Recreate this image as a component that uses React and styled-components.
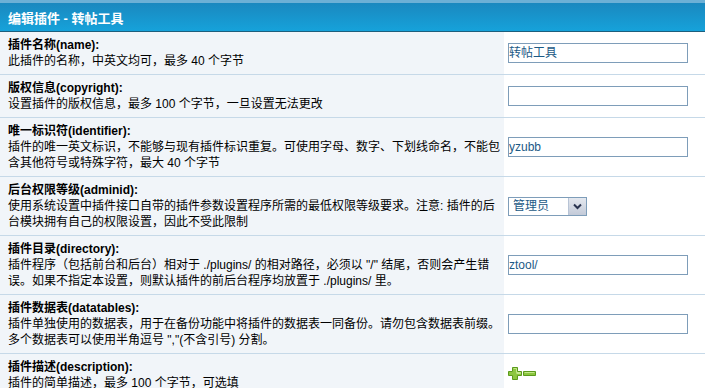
import React from "react";
import styled, { createGlobalStyle } from "styled-components";

const GlobalStyle = createGlobalStyle`
  body {
    margin: 0;
    background: #ffffff;
    font-family: "Liberation Sans", "Noto Sans CJK SC", sans-serif;
    font-size: 12px;
    color: #000;
  }
`;

const fields = [
  {
    title: "插件名称(name):",
    desc: ["此插件的名称，中英文均可，最多 40 个字节"],
    kind: "input",
    value: "转帖工具",
  },
  {
    title: "版权信息(copyright):",
    desc: ["设置插件的版权信息，最多 100 个字节，一旦设置无法更改"],
    kind: "input",
    value: "",
  },
  {
    title: "唯一标识符(identifier):",
    desc: [
      "插件的唯一英文标识，不能够与现有插件标识重复。可使用字母、数字、下划线命名，不能包",
      "含其他符号或特殊字符，最大 40 个字节",
    ],
    kind: "input",
    value: "yzubb",
  },
  {
    title: "后台权限等级(adminid):",
    desc: [
      "使用系统设置中插件接口自带的插件参数设置程序所需的最低权限等级要求。注意: 插件的后",
      "台模块拥有自己的权限设置，因此不受此限制",
    ],
    kind: "select",
    value: "管理员",
  },
  {
    title: "插件目录(directory):",
    desc: [
      "插件程序（包括前台和后台）相对于 ./plugins/ 的相对路径，必须以 \"/\" 结尾，否则会产生错",
      "误。如果不指定本设置，则默认插件的前后台程序均放置于 ./plugins/ 里。",
    ],
    kind: "input",
    value: "ztool/",
  },
  {
    title: "插件数据表(datatables):",
    desc: [
      "插件单独使用的数据表，用于在备份功能中将插件的数据表一同备份。请勿包含数据表前缀。",
      "多个数据表可以使用半角逗号 \",\"(不含引号) 分割。",
    ],
    kind: "input",
    value: "",
  },
  {
    title: "插件描述(description):",
    desc: ["插件的简单描述，最多 100 个字节，可选填"],
    kind: "toggle",
  },
];

const Panel = styled.div`
  width: 705px;
`;

const Header = styled.div`
  height: 32px;
  box-sizing: border-box;
  border-top: 3px solid #6cb0d6;
  border-bottom: 1px solid #1d5f7d;
  background: linear-gradient(#1a88bf, #16a2da);
  display: flex;
  align-items: center;
  padding: 0 0 0 8px;
  color: #ffffff;
  font-size: 13px;
  font-weight: bold;
`;

const Row = styled.div`
  display: flex;
  border-bottom: 1px solid #c6d9e8;
`;

const LabelCell = styled.div`
  width: 504px;
  box-sizing: border-box;
  flex-shrink: 0;
  padding: 5px 4px 5px 8px;
  background: #f1f5f9;
  line-height: 16px;
  overflow: hidden;
`;

const FieldCell = styled.div`
  flex: 1;
  display: flex;
  align-items: center;
  padding-left: 4px;
  background: #ffffff;
`;

const Title = styled.div`
  font-weight: bold;
  white-space: nowrap;
`;

const Desc = styled.div`
  white-space: nowrap;
`;

const TextInput = styled.div`
  width: 180px;
  height: 20px;
  box-sizing: border-box;
  border: 1px solid #7e9db9;
  color: #1c5a86;
  font-size: 12px;
  line-height: 18px;
  white-space: nowrap;
  overflow: hidden;
`;

const SelectBox = styled.div`
  width: 79px;
  height: 19px;
  box-sizing: border-box;
  border: 1px solid #7e9db9;
  display: flex;
  align-items: stretch;
  color: #1c5a86;
  font-size: 12px;
  line-height: 17px;
`;

const SelectText = styled.span`
  flex: 1;
  padding-left: 4px;
`;

const SelectButton = styled.span`
  width: 17px;
  border-left: 1px solid #b8c4d6;
  background: linear-gradient(#e4e8ef, #c3cad8);
  display: flex;
  align-items: center;
  justify-content: center;
`;

const Icons = styled.div`
  display: flex;
  gap: 1px;
  margin-top: -4px;
`;

const Plus = () => (
  <svg width="14" height="13" viewBox="0 0 14 13">
    <path
      d="M4.5 0.5h5v4h4v4h-4v4h-5v-4h-4v-4h4z"
      fill="#8cc63f"
      stroke="#5b9a1c"
    />
    <path d="M5.5 1.5h3v4h4v1h-4" fill="none" stroke="#c2e88a" />
  </svg>
);

const Minus = () => (
  <svg width="13" height="13" viewBox="0 0 13 13">
    <path d="M0.5 4.5h12v4h-12z" fill="#8cc63f" stroke="#5b9a1c" />
    <path d="M1.5 5.5h10" fill="none" stroke="#c2e88a" />
  </svg>
);

const Field = ({ field }) => {
  if (field.kind === "select") {
    return (
      <SelectBox>
        <SelectText>{field.value}</SelectText>
        <SelectButton>
          <svg width="9" height="7" viewBox="0 0 9 7">
            <path d="M1 1.5l3.5 3.5 3.5-3.5" fill="none" stroke="#2a3450" strokeWidth="2" />
          </svg>
        </SelectButton>
      </SelectBox>
    );
  }
  if (field.kind === "toggle") {
    return (
      <Icons>
        <Plus />
        <Minus />
      </Icons>
    );
  }
  return <TextInput>{field.value}</TextInput>;
};

export default function App() {
  return (
    <>
      <GlobalStyle />
      <Panel>
        <Header>编辑插件 - 转帖工具</Header>
        {fields.map((f) => (
          <Row key={f.title}>
            <LabelCell>
              <Title>{f.title}</Title>
              {f.desc.map((line) => (
                <Desc key={line}>{line}</Desc>
              ))}
            </LabelCell>
            <FieldCell>
              <Field field={f} />
            </FieldCell>
          </Row>
        ))}
      </Panel>
    </>
  );
}
